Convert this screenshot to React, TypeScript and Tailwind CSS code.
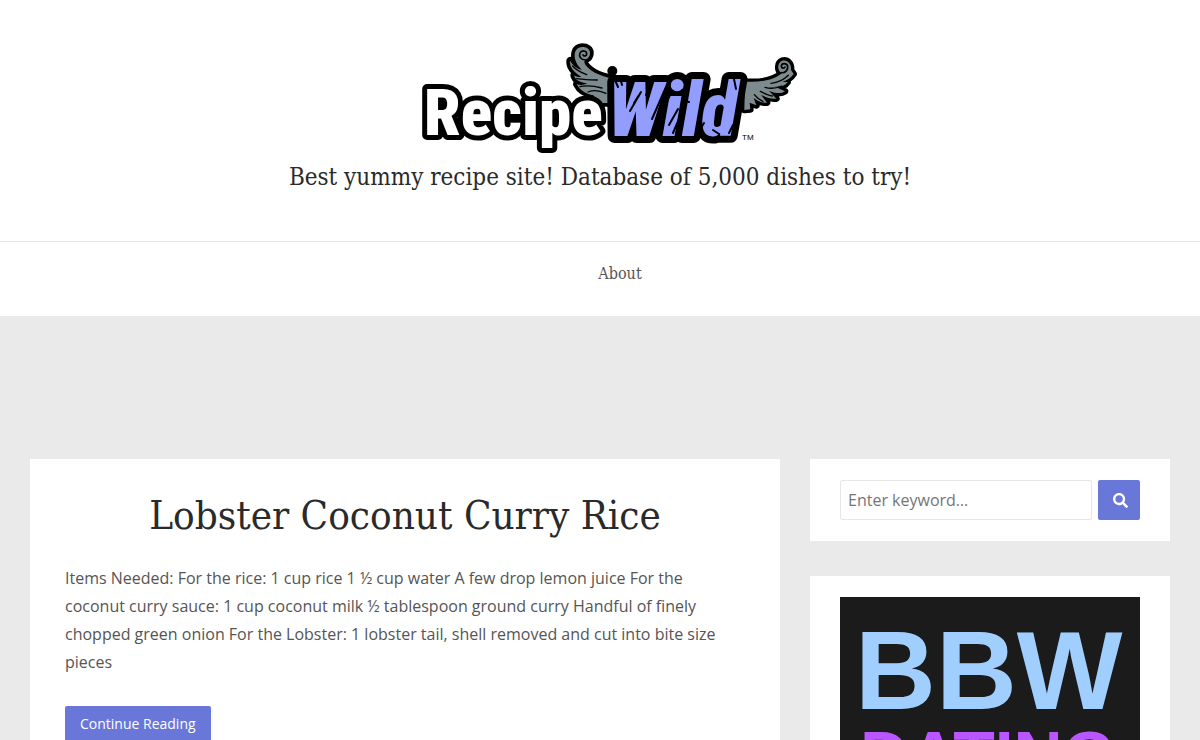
import { FaSearch } from 'react-icons/fa'

const article = {
  title: 'Lobster Coconut Curry Rice',
  excerpt:
    'Items Needed: For the rice: 1 cup rice 1 ½ cup water A few drop lemon juice For the coconut curry sauce: 1 cup coconut milk ½ tablespoon ground curry Handful of finely chopped green onion For the Lobster: 1 lobster tail, shell removed and cut into bite size pieces',
}

function Logo() {
  return (
    <svg viewBox="0 0 400 120" className="h-auto w-[400px] max-w-full" role="img" aria-label="RecipeWild">
      {/* left wing */}
      <g transform="translate(160 3) scale(0.3333)" strokeLinejoin="round" strokeLinecap="round">
        <circle cx="157" cy="99" r="15" />
        <path
          d="M66 27C44 28 38 52 50 76C54 84 60 90 66 96C50 92 38 82 30 68C28 88 44 104 64 116C54 118 48 116 42 112C46 128 62 134 82 136C70 142 60 142 50 138C60 158 80 168 100 172L120 195L175 195L175 124C130 118 94 104 76 80C72 74 72 68 78 64C92 58 94 40 84 32C79 28 72 27 66 27Z"
          fill="#7d8b8f"
          stroke="#000"
          strokeWidth="22"
          paintOrder="stroke"
        />
        <path d="M76 66C62 66 56 54 60 45C64 36 80 37 80 47C80 54 72 56 69 51" fill="none" stroke="#000" strokeWidth="5" />
        <path d="M38 84C50 98 64 104 80 110M50 122C74 124 90 126 112 126M60 146C84 140 104 144 126 150M84 162C104 154 120 158 138 166" fill="none" stroke="#000" strokeWidth="4" />
      </g>
      {/* right wing */}
      <g transform="translate(335 15) scale(0.3333)" strokeLinejoin="round" strokeLinecap="round">
        <path
          d="M30 95C76 98 118 90 140 70C126 62 126 38 142 32C158 28 170 42 168 60L176 72C168 84 154 92 142 96L158 96C150 108 134 112 120 110L150 124C136 134 116 128 102 122L124 146C106 148 88 140 78 134L96 158C80 160 66 152 56 144L64 166L44 158L46 178L28 180Z"
          fill="#7d8b8f"
          stroke="#000"
          strokeWidth="20"
          paintOrder="stroke"
        />
        <path d="M138 68C152 70 160 58 158 48C154 38 139 39 139 49C140 56 148 56 150 51" fill="none" stroke="#000" strokeWidth="5" />
        <path d="M108 100C130 98 146 90 160 76M90 112C104 116 126 114 140 108M76 124C88 130 100 136 112 138M58 134C64 142 74 150 84 154" fill="none" stroke="#000" strokeWidth="4" />
      </g>
      <g fontWeight="900" stroke="#000" strokeLinejoin="round" paintOrder="stroke" fontFamily="'Roboto Condensed', 'Liberation Sans Narrow', sans-serif">
        <text x="24" y="100" fontSize="65" strokeWidth="10" fill="#fff">Recipe</text>
        <text x="208" y="101" fontSize="76" strokeWidth="14" fill="#929dfd" fontStyle="italic">Wild</text>
      </g>
      {/* brush marks over the second word */}
      <g fill="none" stroke="#000" strokeWidth="2" strokeLinecap="round">
        <path d="M215 45L218 52M221 46L222 50M230 76L241 57M234 68L239 60M252 84L266 52M259 84L270 60M246 60L250 52M269 90L278 74M273 98L279 84M282 55L287 57M283 66L289 67M298 98L304 88M313 95L319 99M334 44L336 54M329 98L333 90" />
      </g>
      <text x="342" y="105" fontSize="8" fontFamily="'Liberation Sans', sans-serif">TM</text>
    </svg>
  )
}

function Banner() {
  return (
    <svg viewBox="0 0 300 250" className="block h-auto w-full" role="img" aria-label="BBW Dating">
      <rect width="300" height="250" fill="#1b1b1b" />
      <g fontFamily="'Liberation Sans', Arial, sans-serif" fontWeight="700">
        <text x="15" y="112" fontSize="112" fill="#a0cfff">BBW</text>
        <text x="20" y="182" fontSize="68" fill="#b956ff">DATING</text>
      </g>
    </svg>
  )
}

export default function App() {
  return (
    <div className="min-h-screen bg-[#eaeaea] font-['Open_Sans',sans-serif] text-[#555]">
      <header className="bg-white font-['Roboto_Slab','DejaVu_Serif_Condensed',serif]">
        <div className="flex flex-col items-center border-b border-[#e6e6e6] px-4 pt-[35px] pb-[46px] text-center">
          <a href="#home">
            <Logo />
          </a>
          <p className="mt-1 text-2xl leading-9 text-[#2a2a2a]">Best yummy recipe site! Database of 5,000 dishes to try!</p>
        </div>
        <nav className="flex justify-center pt-5 pb-[30px] pl-10">
          <a href="#about" className="text-base">About</a>
        </nav>
      </header>

      <main className="mx-auto mt-[143px] flex max-w-[1200px] items-start gap-[30px] px-[30px]">
        <article className="min-w-0 flex-1 bg-white px-[35px] pt-8 pb-10">
          <h2 className="text-center font-['Roboto_Slab','DejaVu_Serif_Condensed',serif] text-[40px] leading-12 text-[#2a2a2a]">
            {article.title}
          </h2>
          <p className="mt-[25px] text-base leading-7">{article.excerpt}</p>
          <a href="#recipe" className="mt-[30px] inline-block rounded-xs bg-[#6877d8] px-[15px] text-sm leading-9 text-white">
            Continue Reading
          </a>
        </article>

        <aside className="flex w-[360px] shrink-0 flex-col gap-[35px]">
          <form className="flex gap-1.5 bg-white px-[30px] py-[21px]" onSubmit={(e) => e.preventDefault()}>
            <input
              type="search"
              aria-label="Enter keyword"
              placeholder="Enter keyword…"
              className="h-10 min-w-0 flex-1 rounded-xs border border-[#e6e6e6] px-[7px] text-base outline-none placeholder:text-[#757575]"
            />
            <button type="submit" aria-label="Search" className="flex h-10 w-[42px] items-center justify-center rounded-xs bg-[#6877d8] pl-0.5 text-white">
              <FaSearch size={15} />
            </button>
          </form>
          <a href="#banner" className="bg-white px-[30px] py-[21px]">
            <Banner />
          </a>
        </aside>
      </main>
    </div>
  )
}
